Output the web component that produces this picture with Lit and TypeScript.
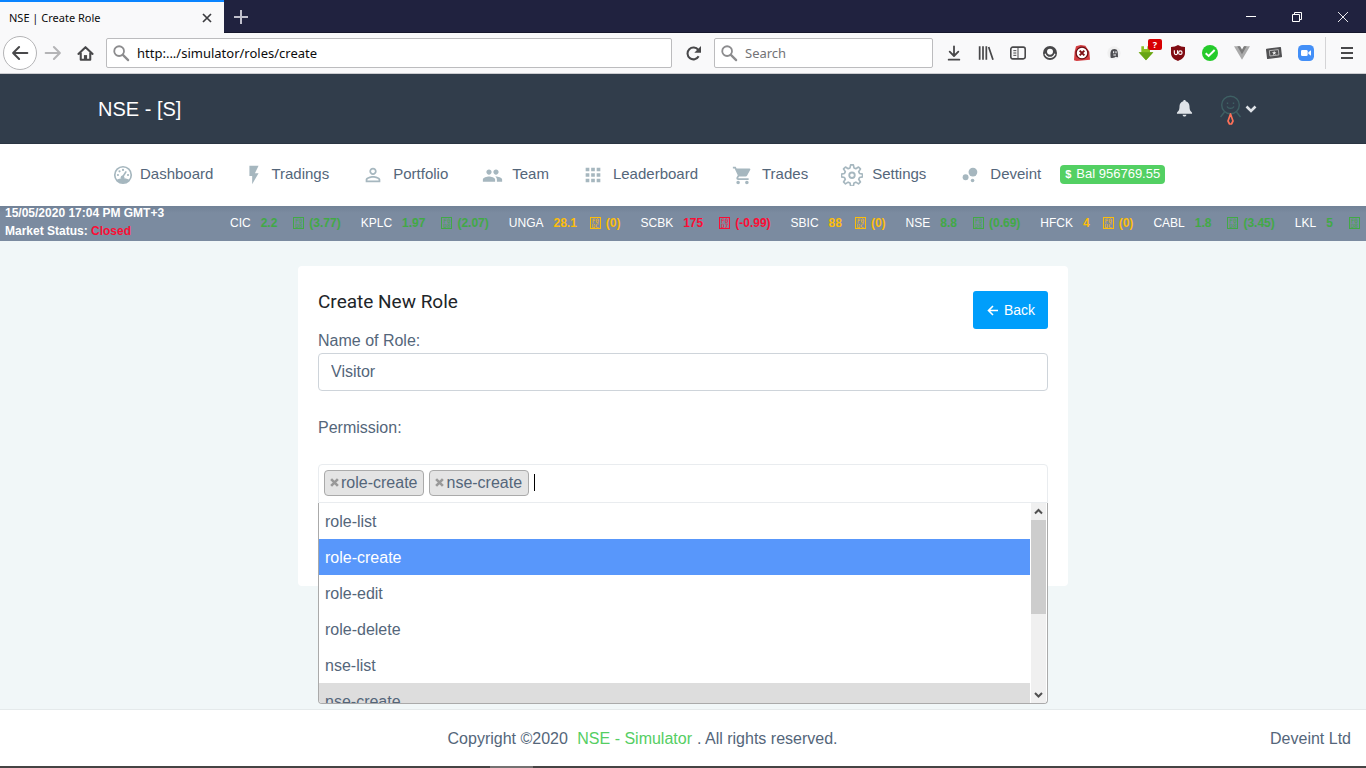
import { LitElement, html, svg, css, nothing } from "lit";
import { customElement, property } from "lit/decorators.js";

const toolIcons = {
  back: svg`<path d="M20 12H5M11 5.500l-6.500 6.500 6.500 6.500" fill="none" stroke="currentColor" stroke-width="2.200" stroke-linecap="round" stroke-linejoin="round"/>`,
  forward: svg`<path d="M4 12h15M13 5.500l6.500 6.500-6.500 6.500" fill="none" stroke="#b4b4b6" stroke-width="2.200" stroke-linecap="round" stroke-linejoin="round"/>`,
  home: svg`<path d="M3 12.500L12 4l9 8.500M6 11v9h12v-9" fill="none" stroke="currentColor" stroke-width="2.600" stroke-linecap="round" stroke-linejoin="round"/><path d="M10 20v-6h4v6z" fill="currentColor"/>`,
  search: svg`<circle cx="9.500" cy="9.500" r="6.500" fill="none" stroke="#8c8c8e" stroke-width="2.400"/><path d="M14.500 14.500l7 7" stroke="#8c8c8e" stroke-width="3" stroke-linecap="round"/>`,
  reload: svg`<path d="M18.500 15.500A7.500 7.500 0 1 1 18 7.500" fill="none" stroke="currentColor" stroke-width="2.600"/><path d="M21.500 2.500v8.500h-8.500z" fill="currentColor"/>`,
  download: svg`<path d="M12 2v14M5.500 10l6.500 6.500 6.500-6.500M4 22h16" fill="none" stroke="currentColor" stroke-width="2.700" stroke-linecap="round" stroke-linejoin="round"/>`,
  library: svg`<path d="M2.500 2v20M7.500 2v20M12.500 2v20M16 3l6.500 19" fill="none" stroke="currentColor" stroke-width="2.600"/>`,
  sidebar: svg`<rect x="1.200" y="3.200" width="21.600" height="17.600" rx="3" fill="none" stroke="currentColor" stroke-width="2.400"/><path d="M12 4v16M5 8.500h4.500M5 12h4.500M5 15.500h4.500" stroke="currentColor" stroke-width="1.500"/>`,
  account: svg`<circle cx="12" cy="12" r="10.500" fill="currentColor"/><path d="M7.500 10a4.500 4.500 0 0 1 9 0c0 6-9 6-9 0z" fill="#fff"/><path d="M4.500 13c3 7.500 12 7.500 15 0" fill="none" stroke="#fff" stroke-width="1.800"/>`,
  blocker: svg`<path d="M3 2l7-2 7 1 6 9 1 12-8 1-12 1-4-1 1-13z" fill="#d33d40"/><circle cx="12" cy="12" r="8.800" fill="#fff" stroke="#6d0f14" stroke-width="2"/><path d="M8.500 8.500l7 7M15.500 8.500l-7 7" stroke="#7d0f14" stroke-width="3"/>`,
  ghost: svg`<circle cx="12" cy="12" r="10" fill="#f0f0f0"/><path d="M7 19c-1-8 0-13 5.500-13S18 11 18 18c-2 1-3-1-4 0s-4 2-7 1z" fill="#4e4e52"/><path d="M11.500 9.500v3M15 9.500v3M11 15h4" stroke="#fff" stroke-width="1.600"/>`,
  grabber: svg`<path d="M5 2h4v4h5V2h4v9h5L12 23 1 11h4z" fill="#8bc020"/><path d="M12 23L1 11h22z" fill="#68a514"/>`,
  shield: svg`<path d="M12 0c3 2 6.500 3 10.500 3V12c0 6.500-5 9.500-10.500 12C6 21.500 1.500 18.500 1.500 12V3C5.500 3 9 2 12 0z" fill="#800b12"/><path d="M6.500 8v4a2.400 2.400 0 0 0 4.800 0V8" fill="none" stroke="#fff" stroke-width="1.700"/><circle cx="15.500" cy="11.500" r="2.600" fill="none" stroke="#fff" stroke-width="1.700"/>`,
  check: svg`<circle cx="12" cy="12" r="12" fill="#25cb2b"/><path d="M5.500 12.500l4.500 4 9-9" fill="none" stroke="#fff" stroke-width="3"/>`,
  vue: svg`<path d="M0 2h9l3 5 3-5h9L12 22z" fill="#ababab"/><path d="M5 2h4l3 5 3-5h4l-7 12z" fill="#7c7c7c"/>`,
  ticket: svg`<path d="M1 6.500L21.500 4 23 17.500 2.500 20z" fill="#505052" stroke="#505052" stroke-width="2" stroke-linejoin="round"/><path d="M5 8.500l13.500-1.600.9 8-13.500 1.600z" fill="none" stroke="#ccc" stroke-width="1.200"/><path d="M12.200 8.500l1 2.300 2.500.1-2 1.600.8 2.400-2.100-1.400-2.100 1.500.6-2.500-2-1.500 2.500-.2z" fill="#eee"/>`,
  camera: svg`<rect width="24" height="24" rx="7" fill="#438ff7"/><rect x="4.500" y="7.500" width="10" height="9" rx="2" fill="#fff"/><path d="M15.500 11l4-3v8l-4-3z" fill="#fff"/>`,
  menu: svg`<path d="M3 4.500h18M3 12h18M3 19.500h18" stroke="currentColor" stroke-width="2.800"/>`,
};

const navIcons = {
  gauge: svg`<circle cx="12" cy="12" r="9" fill="none" stroke="currentColor" stroke-width="1.800"/><path d="M5 17.500c3-2.500 11-2.500 14 0-3 4.500-11 4.500-14 0z" fill="currentColor"/><path d="M11 15l4.500-7" stroke="currentColor" stroke-width="1.800"/><g fill="currentColor"><circle cx="6.500" cy="12" r="1.200"/><circle cx="8.200" cy="8" r="1.200"/><circle cx="12" cy="6.500" r="1.200"/><circle cx="17.500" cy="12" r="1.200"/><circle cx="11.500" cy="14.500" r="2"/></g>`,
  bolt: svg`<path d="M7 2v11h3v9l7-12h-4l4-8z" fill="currentColor"/>`,
  person: svg`<path d="M12 5.900c1.160 0 2.100.94 2.100 2.100s-.94 2.100-2.100 2.100S9.900 9.160 9.900 8s.94-2.100 2.100-2.100m0 9c2.970 0 6.100 1.460 6.100 2.100v1.100H5.900V17c0-.64 3.130-2.100 6.100-2.100M12 4C9.790 4 8 5.790 8 8s1.790 4 4 4 4-1.790 4-4-1.790-4-4-4zm0 9c-2.670 0-8 1.340-8 4v3h16v-3c0-2.660-5.330-4-8-4z" fill="currentColor"/>`,
  people: svg`<path d="M16 11c1.660 0 2.990-1.340 2.990-3S17.660 5 16 5c-1.660 0-3 1.340-3 3s1.340 3 3 3zm-8 0c1.660 0 2.990-1.340 2.990-3S9.660 5 8 5C6.340 5 5 6.340 5 8s1.340 3 3 3zm0 2c-2.330 0-7 1.170-7 3.500V19h14v-2.500c0-2.330-4.670-3.500-7-3.500zm8 0c-.29 0-.62.020-.97.050 1.160.84 1.970 1.970 1.970 3.450V19h6v-2.500c0-2.330-4.670-3.500-7-3.500z" fill="currentColor"/>`,
  grid: svg`<path d="M4 4h4v4H4zM10 4h4v4h-4zM16 4h4v4h-4zM4 10h4v4H4zM10 10h4v4h-4zM16 10h4v4h-4zM4 16h4v4H4zM10 16h4v4h-4zM16 16h4v4h-4z" fill="currentColor"/>`,
  cart: svg`<path d="M7 18c-1.100 0-1.990.9-1.990 2S5.900 22 7 22s2-.9 2-2-.9-2-2-2zM1 2v2h2l3.600 7.590-1.350 2.450c-.16.28-.25.61-.25.96 0 1.100.9 2 2 2h12v-2H7.420c-.14 0-.25-.11-.25-.25l.03-.12.9-1.630h7.450c.75 0 1.410-.41 1.750-1.030l3.580-6.490c.08-.14.12-.31.12-.48 0-.55-.45-1-1-1H5.210l-.94-2H1zm16 16c-1.100 0-1.990.9-1.990 2s.89 2 1.990 2 2-.9 2-2-.9-2-2-2z" fill="currentColor"/>`,
  gear: svg`<path d="M10.500 1h3l.7 3.300 2 .9 2.900-1.900 2.100 2.100-1.900 2.900.9 2 3.300.7v3l-3.300.7-.9 2 1.900 2.900-2.100 2.100-2.900-1.900-2 .9-.7 3.300h-3l-.7-3.300-2-.9-2.900 1.900-2.100-2.100 1.900-2.900-.9-2L.5 14v-3l3.300-.7.9-2-1.900-2.900 2.100-2.100 2.900 1.900 2-.9z" fill="none" stroke="currentColor" stroke-width="1.800" stroke-linejoin="round"/><circle cx="12" cy="12.300" r="3" fill="none" stroke="currentColor" stroke-width="2"/>`,
  bubbles: svg`<g fill="currentColor"><circle cx="7.200" cy="14.400" r="3.200"/><circle cx="14.800" cy="18" r="2"/><circle cx="15.200" cy="8.800" r="4.800"/></g>`,
};

const icon = (shape: unknown, size: number, box = "0 0 24 24") =>
  html`<svg width=${size} height=${size} viewBox=${box} aria-hidden="true">${shape}</svg>`;

const svgBase = css`
  *, *::before, *::after { box-sizing: border-box; }
  svg { display: block; flex: none; }
  button { font: inherit; color: inherit; background: none; border: 0; padding: 0; margin: 0; }
  input { font: inherit; color: inherit; min-width: 0; outline: 0; }
  a { color: inherit; text-decoration: none; }
  ul { list-style: none; margin: 0; padding: 0; }
`;

@customElement("browser-chrome")
class BrowserChrome extends LitElement {
  static styles = [svgBase, css`
    :host { display: block; flex: none; color: #48484a; font-family: "Noto Sans", "Open Sans", sans-serif; }
    .tabs { display: flex; height: 33px; background: #20223f; box-shadow: inset 0 -1px #15172c; }
    .tab { width: 224px; display: flex; align-items: center; justify-content: space-between; padding: 0 12px 0 9px; background: #f9f9fa; border-top: 2px solid #0a84ff; font-size: 11px; color: #0c0c0d; }
    .plus { width: 34px; display: grid; place-items: center; }
    .window { margin-left: auto; display: flex; }
    .window button { width: 46px; display: grid; place-items: center; }
    .bar { display: flex; align-items: center; height: 41px; background: #f9f9fa; border-bottom: 1px solid #ccccd0; padding: 0 2px 0 3px; }
    .tool { position: relative; width: 32px; height: 32px; display: grid; place-items: center; flex: none; }
    .round { width: 34px; height: 34px; border: 1px solid #b4b4b6; border-radius: 50%; background: #fff; }
    .reload { width: 42px; }
    .box { display: flex; align-items: center; height: 30px; border: 1px solid #bcbcbe; border-radius: 2px; background: #fff; padding: 0 5px; font-size: 13px; }
    .box input { flex: 1; width: 0; border: 0; padding: 0; background: none; }
    .url { flex: 1; margin-left: 5px; color: #0c0c0d; gap: 7px; }
    .find { width: 219px; margin-right: 5px; gap: 7px; }
    .find input::placeholder { color: #737376; opacity: 1; }
    .badge { position: absolute; top: 2px; right: 0; width: 14px; height: 11px; border-radius: 2px; background: #d70002; color: #fff; font-weight: 700; font-size: 9px; line-height: 11px; text-align: center; }
    .end { margin-left: 3px; padding-left: 4px; border-left: 1px solid #d4d4d6; }
    .end .tool { width: 34px; }
  `];

  private tool(name: keyof typeof toolIcons, size = 16, extra = "", badge = "") {
    return html`<button class="tool ${extra}" aria-label=${name}>${icon(toolIcons[name], size)}${badge ? html`<span class="badge">${badge}</span>` : nothing}</button>`;
  }

  render() {
    return html`
      <div class="tabs">
        <div class="tab"><span>NSE | Create Role</span>
          <button aria-label="Close tab">${icon(svg`<path d="M1 1l8 8M9 1l-8 8" stroke="#3c3c40" stroke-width="1.700"/>`, 10, "0 0 10 10")}</button></div>
        <button class="plus" aria-label="New tab">${icon(svg`<path d="M7 0v14M0 7h14" stroke="#c0c0cc" stroke-width="2"/>`, 14, "0 0 14 14")}</button>
        <div class="window">
          <button aria-label="Minimise">${icon(svg`<path d="M0 4.500h10" stroke="#fff"/>`, 10, "0 0 10 10")}</button>
          <button aria-label="Restore">${icon(svg`<path d="M.5 2.500h7v7h-7zM2.500 2.500v-2h7v7h-2" fill="none" stroke="#fff"/>`, 10, "0 0 10 10")}</button>
          <button aria-label="Close">${icon(svg`<path d="M0 0l10 10M10 0L0 10" stroke="#fff" stroke-width=".9"/>`, 10, "0 0 10 10")}</button>
        </div>
      </div>
      <div class="bar">
        ${this.tool("back", 22, "round")}${this.tool("forward", 22)}${this.tool("home", 19)}
        <div class="box url">${icon(toolIcons.search, 18)}<input aria-label="Address" value="http:.../simulator/roles/create"></div>
        ${this.tool("reload", 19, "reload")}
        <div class="box find">${icon(toolIcons.search, 18)}<input aria-label="Search" placeholder="Search"></div>
        ${this.tool("download")}${this.tool("library")}${this.tool("sidebar")}${this.tool("account")}
        ${this.tool("blocker")}${this.tool("ghost", 16)}${this.tool("grabber", 16, "", "?")}${this.tool("shield")}
        ${this.tool("check")}${this.tool("vue")}${this.tool("ticket")}${this.tool("camera")}
        <div class="end">${this.tool("menu", 16)}</div>
      </div>`;
  }
}

type Quote = { symbol: string; price: string; change?: string; trend: "up" | "flat" | "down" };
const quotes: Quote[] = [
  { symbol: "CIC", price: "2.2", change: "(3.77)", trend: "up" },
  { symbol: "KPLC", price: "1.97", change: "(2.07)", trend: "up" },
  { symbol: "UNGA", price: "28.1", change: "(0)", trend: "flat" },
  { symbol: "SCBK", price: "175", change: "(-0.99)", trend: "down" },
  { symbol: "SBIC", price: "88", change: "(0)", trend: "flat" },
  { symbol: "NSE", price: "8.8", change: "(0.69)", trend: "up" },
  { symbol: "HFCK", price: "4", change: "(0)", trend: "flat" },
  { symbol: "CABL", price: "1.8", change: "(3.45)", trend: "up" },
  { symbol: "LKL", price: "5", trend: "up" },
];
const codes = { up: ["F0", "D8"], flat: ["F0", "DC"], down: ["F0", "D7"] };

@customElement("market-ticker")
class MarketTicker extends LitElement {
  static styles = [svgBase, css`
    :host { display: flex; flex: none; height: 35px; overflow: hidden; background: linear-gradient(#728297, #7b8ba0 20%); color: #fff; font-size: 12px; font-weight: 700; white-space: nowrap; }
    .status { flex: none; width: 230px; padding-left: 5px; line-height: 18px; margin-top: -2px; }
    .closed { color: #fb0d35; }
    .quotes { display: flex; align-items: center; gap: 20px; flex: 1; min-width: 0; overflow: hidden; padding-bottom: 2px; }
    .quote { display: flex; align-items: center; flex: none; }
    .symbol { font-weight: 400; margin-right: 10px; }
    .up { color: #42a946; }
    .flat { color: #fcbd0b; }
    .down { color: #fb0d35; }
    .code { display: grid; width: 11px; height: 12px; margin: 0 5px 0 16px; border: 1px solid; font: 400 6px/5px "DejaVu Sans Mono", monospace; text-align: center; }
    .flat .code { margin-left: 13px; }
    .value { display: flex; align-items: center; }
  `];
  render() {
    return html`
      <div class="status"><div>15/05/2020 17:04 PM GMT+3</div><div>Market Status: <span class="closed">Closed</span></div></div>
      <ul class="quotes">${quotes.map(q => html`<li class="quote"><span class="symbol">${q.symbol}</span>
        <span class="value ${q.trend}">${q.price}<span class="code" aria-hidden="true">${codes[q.trend].map(c => html`<span>${c}</span>`)}</span>${q.change ?? nothing}</span></li>`)}</ul>`;
  }
}

@customElement("permission-select")
class PermissionSelect extends LitElement {
  @property({ attribute: false }) chosen = ["role-create", "nse-create"];
  @property({ attribute: false }) options = ["role-list", "role-create", "role-edit", "role-delete", "nse-list", "nse-create"];
  @property() active = "role-create";

  static styles = [svgBase, css`
    :host { display: block; position: relative; }
    .field { display: flex; align-items: center; gap: 5px; height: 39px; padding: 0 5px 2px; border: 1px solid #e9ecef; border-radius: 4px 4px 0 0; background: #fff; }
    .chip { display: flex; align-items: center; gap: 2px; height: 26px; padding: 0 6px 0 5px; border: 1px solid #aaa; border-radius: 4px; background: #e4e4e4; line-height: 24px; }
    .chip button { color: #999; }
    .field input { flex: 1; border: 0; padding: 0; background: none; }
    .caret { width: 1px; height: 17px; background: #000; }
    .menu { position: absolute; z-index: 2; top: 39px; left: 0; right: 0; display: grid; grid-template-columns: 1fr 17px; height: 201px; border: 1px solid #aaa; border-top: 0; border-radius: 0 0 4px 4px; background: #fff; overflow: hidden; }
    .list { overflow: hidden; height: 200px; }
    .option { padding: 7px 6px 5px; line-height: 24px; }
    .selected { background: #ddd; }
    .active { background: #5897fb; color: #fff; }
    .scroll { display: flex; flex-direction: column; align-items: stretch; margin: 0 1px; background: #f0f0f0; height: 200px; color: #505050; }
    .arrow { height: 17px; display: grid; place-items: center; }
    .thumb { height: 94px; background: #cdcdcd; }
    .scroll .arrow:last-child { margin-top: auto; }
  `];
  render() {
    return html`
      <div class="field">
        ${this.chosen.map(c => html`<span class="chip"><button type="button" aria-label="Remove ${c}">${icon(svg`<path d="M1 1l6 6M7 1l-6 6" stroke="currentColor" stroke-width="2.300"/>`, 9, "0 0 8 8")}</button>${c}</span>`)}
        <span class="caret"></span><input aria-label="Permission">
      </div>
      <div class="menu">
        <ul class="list" role="listbox" aria-multiselectable="true">
          ${this.options.map(o => html`<li role="option" aria-selected=${this.chosen.includes(o)} class="option ${this.chosen.includes(o) ? "selected" : ""} ${o === this.active ? "active" : ""}">${o}</li>`)}
        </ul>
        <div class="scroll" aria-hidden="true">
          <span class="arrow">${icon(svg`<path d="M1 6.500L4.500 3 8 6.500" fill="none" stroke="currentColor" stroke-width="2"/>`, 9, "0 0 9 9")}</span>
          <span class="thumb"></span>
          <span class="arrow">${icon(svg`<path d="M1 3l3.500 3.500L8 3" fill="none" stroke="currentColor" stroke-width="2"/>`, 9, "0 0 9 9")}</span>
        </div>
      </div>`;
  }
}

const links: { label: string; shape: keyof typeof navIcons; size: number; narrow?: boolean }[] = [
  { label: "Dashboard", shape: "gauge", size: 22, narrow: true },
  { label: "Tradings", shape: "bolt", size: 22, narrow: true },
  { label: "Portfolio", shape: "person", size: 22 },
  { label: "Team", shape: "people", size: 21 },
  { label: "Leaderboard", shape: "grid", size: 22 },
  { label: "Trades", shape: "cart", size: 21 },
  { label: "Settings", shape: "gear", size: 22 },
  { label: "Deveint", shape: "bubbles", size: 22 },
];

@customElement("app-root")
class AppRoot extends LitElement {
  static styles = [svgBase, css`
    :host { display: flex; flex-direction: column; min-height: 100vh; background: #f1f7f8; color: #54667a; font: 16px/24px "Liberation Sans", Arial, sans-serif; }
    .container { width: 100%; max-width: 1170px; margin: 0 auto; display: flex; align-items: center; }
    .top { flex: none; background: #313d4b; border-bottom: 1px solid #2a3542; color: #fff; }
    .top .container { height: 69px; justify-content: space-between; padding-right: 11px; }
    .brand { font-size: 20px; }
    .user { display: flex; align-items: center; gap: 27px; color: #dfe3e8; }
    .profile { display: flex; align-items: center; gap: 4px; }
    .nav { flex: none; background: #fff; }
    .nav .container { height: 62px; padding-bottom: 2px; font-size: 15px; }
    .link { display: flex; align-items: center; gap: 8px; padding: 0 16px; white-space: nowrap; }
    .glyph { width: 24px; display: flex; justify-content: center; color: #a6b7bf; padding-top: 2px; }
    .narrow { width: 18px; }
    .balance { display: flex; align-items: center; gap: 5px; height: 19px; margin-left: 3px; padding: 0 5px; border-radius: 4px; background: #53d063; color: #fff; font-size: 13px; white-space: nowrap; }
    .dollar { font-weight: 700; font-size: 11px; }
    main { flex: 1 0 auto; padding: 25px 15px 0; }
    .card { max-width: 770px; margin: 0 auto; padding: 25px 20px 83px; border-radius: 4px; background: #fff; }
    .head { display: flex; justify-content: space-between; align-items: flex-start; }
    h1 { margin: 0; font: 400 19px/22px Roboto, sans-serif; color: #212529; }
    .back { display: flex; align-items: center; gap: 5px; height: 38px; padding: 0 13px; border-radius: 3px; background: #009efb; color: #fff; font-size: 14px; }
    .label { display: block; }
    .text { display: block; width: 100%; height: 38px; padding: 0 12px; border: 1px solid #ced4da; border-radius: 4px; background: #fff; margin-bottom: 25px; }
    .permission { margin-bottom: 24px; }
    footer { flex: none; display: flex; align-items: center; height: 57px; padding: 2px 15px 0; background: #fff; border-top: 1px solid #e5eaeb; }
    .copy { flex: 1; text-align: center; }
    .copy a { color: #55ce63; margin: 0 5px; }
    .taskbar { flex: none; height: 2px; background: #464444; padding-left: 490px; }
    .running { display: block; width: 43px; height: 2px; background: #747272; }
  `];

  render() {
    return html`
      <browser-chrome></browser-chrome>
      <header class="top"><div class="container">
        <a class="brand" href="#">NSE - [S]</a>
        <div class="user">
          <button aria-label="Notifications">${icon(svg`<path d="M8 0c.8 0 1.300.5 1.300 1.300C12 2 13.300 4 13.300 7c0 4 1.200 5 2.700 6.500v1H0v-1C1.500 12 2.700 11 2.700 7c0-3 1.300-5 4-5.700C6.700.5 7.200 0 8 0zM6 15.500h4c0 1.200-1 2-2 2s-2-.8-2-2z" fill="currentColor"/>`, 17, "0 0 16 18")}</button>
          <button class="profile" aria-label="Profile">
            <svg width="21" height="32" viewBox="0 0 21 32" aria-hidden="true"><g fill="none" stroke="#3e6064" stroke-width="1.400"><circle cx="10.500" cy="12" r="8.800"/><path d="M7 13.500c1.500 2.500 5.500 2.500 7 0M4.500 19L.5 24M16.500 19l4 5M7.500 9.500V11M13.500 9.500V11"/></g><path d="M10.500 21l2.500 7-1.500 3h-2L8 28z" fill="none" stroke="#ff7058" stroke-width="1.700" stroke-linejoin="round"/></svg>
            ${icon(svg`<path d="M1.500 3.500L6 8l4.500-4.500" fill="none" stroke="currentColor" stroke-width="2.600"/>`, 12, "0 0 12 12")}
          </button>
        </div>
      </div></header>
      <nav class="nav"><div class="container">
        ${links.map(l => html`<a class="link" href="#"><span class="glyph ${l.narrow ? "narrow" : ""}">${icon(navIcons[l.shape], l.size)}</span>${l.label}</a>`)}
        <span class="balance"><span class="dollar">$</span>Bal 956769.55</span>
      </div></nav>
      <market-ticker></market-ticker>
      <main><form class="card">
        <div class="head"><h1>Create New Role</h1>
          <a class="back" href="#">${icon(svg`<path d="M12 6.500H2.500M7 2L2.500 6.500 7 11" fill="none" stroke="currentColor" stroke-width="1.600"/>`, 13, "0 0 13 13")}Back</a></div>
        <label class="label" for="role">Name of Role:</label>
        <input class="text" id="role" value="Visitor">
        <div class="label permission">Permission:</div>
        <permission-select></permission-select>
      </form></main>
      <footer><div class="copy">Copyright ©2020 <a href="#">NSE - Simulator</a>. All rights reserved.</div><div>Deveint Ltd</div></footer>
      <div class="taskbar"><span class="running"></span></div>`;
  }
}
